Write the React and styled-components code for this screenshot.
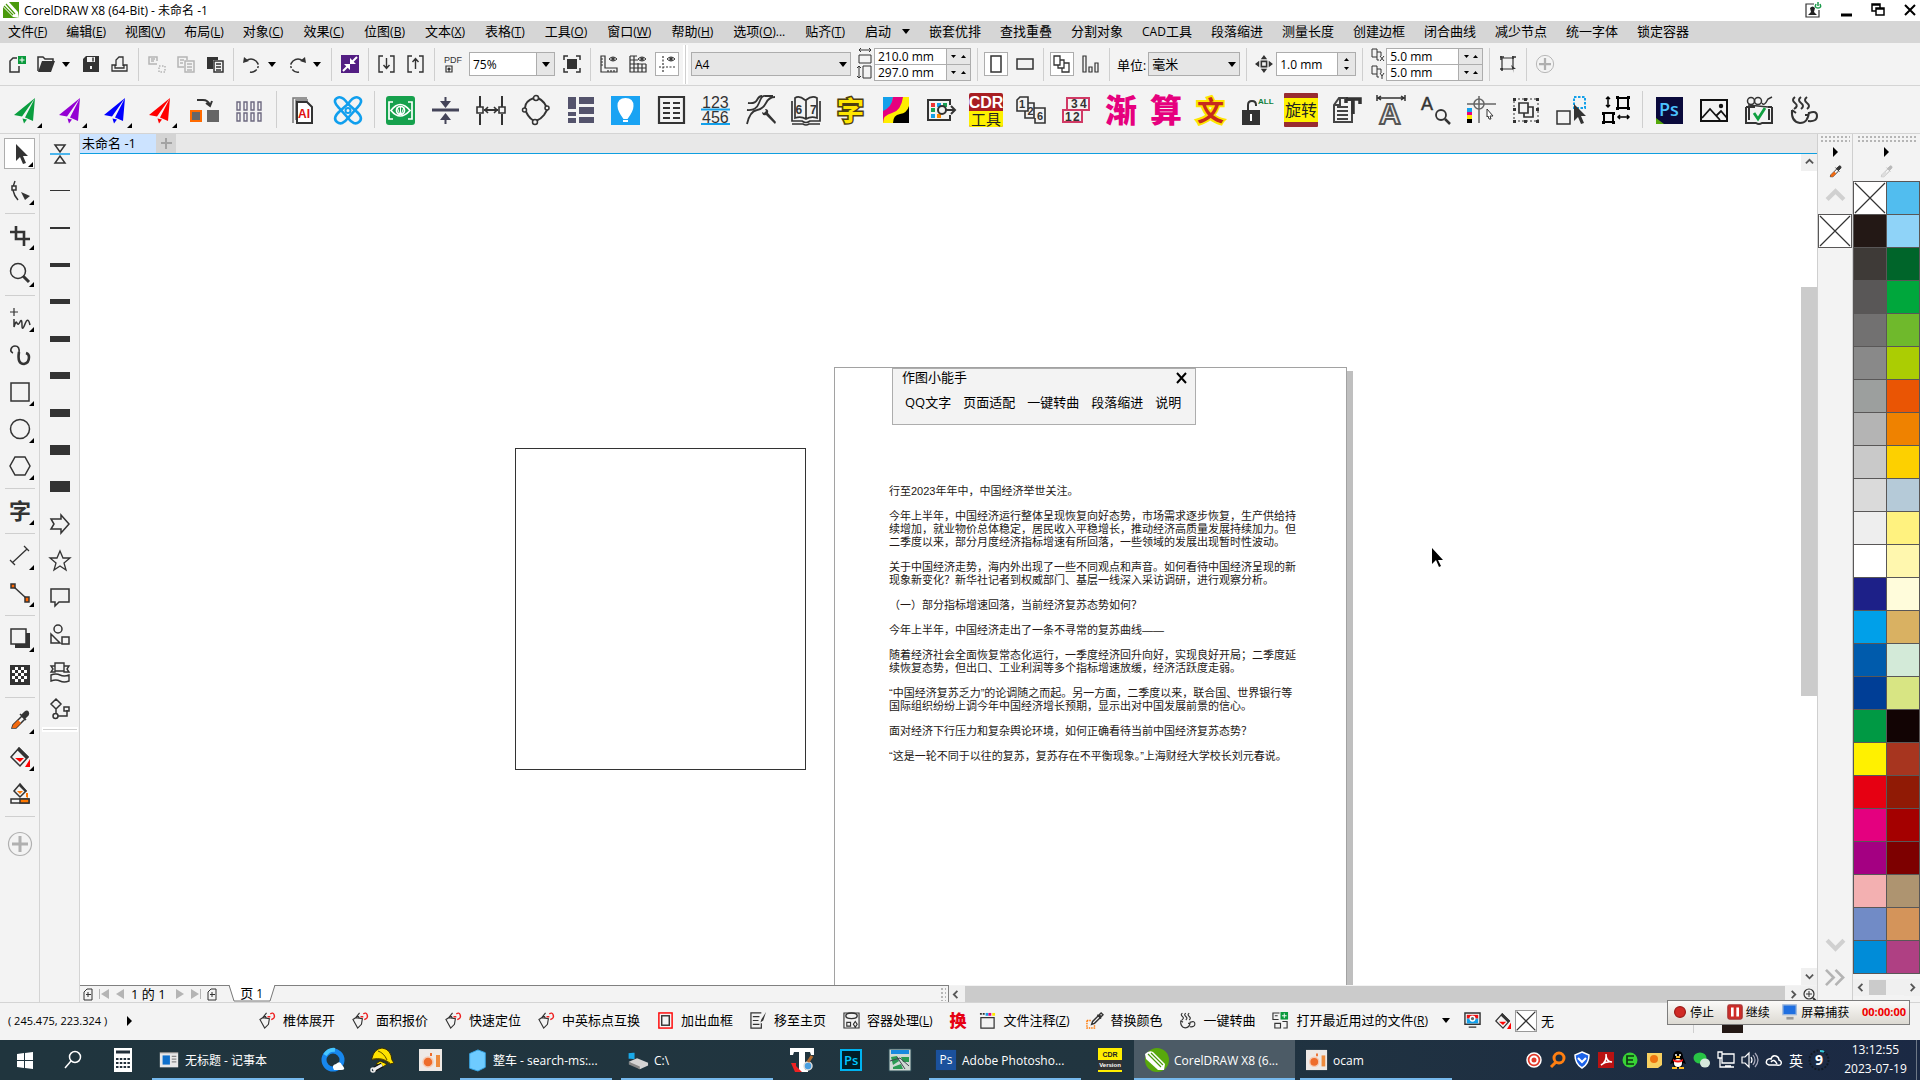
import React, { useState } from 'react';
import styled, { createGlobalStyle, css } from 'styled-components';

const FONT = `'Open Sans', 'Noto Sans CJK SC', sans-serif`;
const DARK = '#333333';

const GlobalStyle = createGlobalStyle`
  * {
    box-sizing: border-box;
  }
  body {
    margin: 0;
    font-family: ${FONT};
    font-size: 12px;
    color: #000;
    background: #f3f3f3;
  }
  button,
  input,
  select {
    font: inherit;
    color: inherit;
    margin: 0;
  }
  button {
    padding: 0;
    border: 0;
    background: none;
  }
`;

/* ---------- shared parts ---------- */

const Svg = styled.svg`
  display: block;
  flex: none;
  overflow: visible;
`;

const Icon = ({ name, size = 18, box = size, h = size }) => (
  <Svg
    width={size}
    height={h}
    viewBox={`0 0 ${box} ${(box * h) / size}`}
    fill="none"
    stroke={DARK}
    strokeWidth="1.5"
    aria-hidden="true"
  >
    {icons[name]}
  </Svg>
);

const Cn = styled.span`
  font-size: 13px;
`;

const Label = ({ text, accel, tail }) => (
  <>
    <Cn>{text}</Cn>
    {accel && (
      <>
        (<u>{accel}</u>){tail}
      </>
    )}
  </>
);

const triangles = {
  down: '0,0 8,0 4,5',
  right: '0,0 5,5 0,10',
  smallDown: '0,0 5,0 2.5,3',
  smallUp: '0,3 5,3 2.5,0',
};

const Tri = ({ dir = 'down', color = '#000' }) => {
  const small = dir.startsWith('small');
  return (
    <Svg
      width={small ? 5 : dir === 'right' ? 5 : 8}
      height={small ? 3 : dir === 'right' ? 10 : 5}
      aria-hidden="true"
    >
      <polygon points={triangles[dir]} fill={color} />
    </Svg>
  );
};

const Corner = styled.i`
  position: absolute;
  right: ${(p) => p.$right || 4}px;
  bottom: ${(p) => p.$bottom || 1}px;
  border-left: 5px solid transparent;
  border-bottom: 5px solid #000;
`;

/* ---------- icons ---------- */

const plane = (color) => (
  <g fill={color} stroke="none">
    <path d="M25 3L4 20l8 1.5zM25 3L15 22.5l8 3.500zM12.500 23.500l1.500 5 3-4z" />
  </g>
);

const pipette = (color, tip) => (
  <>
    <path d="M2 18l1-3 9-9 3 3-9 9z" stroke={color} />
    <path d="M2 18l1-3 5-5 3 3-5 5z" fill={tip} stroke="none" />
    <path d="M10 4l6 6M12 5l3-3q2-1.500 3 0t0 3l-3 3z" fill={color} stroke={color} />
  </>
);

const spray = (
  <>
    <path d="M1 8l3-2 7 1-1 6-4 4zM4 6l4-5M8 7L6 3" strokeWidth="1.200" />
    <path d="M9 5h3M12 2q3-2 4 1t-1 4l-2 1" stroke="#e22" strokeWidth="1.500" />
  </>
);

const cup = (
  <>
    <path d="M3 15q-1 12 8 13 8 0 9-11M20 18q8-3 8 3t-9 5M3 15l4 3M16 20h4" strokeWidth="2" />
    <path d="M6 2q-4 3 0 6t-1 6M12 2q-4 3 0 6t0 6M18 2q-4 3 0 6t0 6" strokeWidth="2" />
  </>
);

const icons = {
  /* standard bar, 18 x 18 */
  logo: (
    <g stroke="none">
      <rect width="16" height="16" fill="#4a9a0c" />
      <path d="M0 0h6l9 10 1 6-6-1L0 5z" fill="#fff" />
      <path d="M3 2l9 10M1 4l9 9" stroke="#4a9a0c" strokeWidth="1.200" />
    </g>
  ),
  newDoc: (
    <>
      <path d="M9 3H5L2 6v11h9v-6" />
      <path d="M10 1h8v8h-8z" fill="#0a9a3c" stroke="none" />
      <path d="M14 2.500v5M11.500 5h5" stroke="#fff" strokeWidth="1" />
    </>
  ),
  open: (
    <>
      <path d="M1 16V2h5l2 2h8v3" />
      <path d="M1 17L5 6h13l-4 11z" fill={DARK} stroke="none" />
    </>
  ),
  save: (
    <>
      <path d="M1 4l3-3h13v16H1z" fill={DARK} stroke="none" />
      <path d="M5 2h8v5H5zM8 11h2v3H8z" fill="#f3f3f3" stroke="none" />
      <path d="M11 2.500v4" />
    </>
  ),
  print: <path d="M5 11V5l3-3h4v9M1 10h3v3h9v-3h3v6H1z" strokeWidth="1.300" />,
  cut: (
    <g stroke="#b5b5b5">
      <path d="M9 9H1V2h8v4M3 4h4M3 6h3" />
      <path d="M11 11h6v6h-6z" strokeDasharray="1.500 1.500" />
    </g>
  ),
  copy: (
    <g stroke="#b5b5b5">
      <path d="M7 12H1V2h9v3M3 5h4M3 8h3" />
      <path d="M8 6h9v11H8zM10 9h5M10 12h5M10 15h5" />
    </g>
  ),
  paste: (
    <>
      <path d="M1 2h11v3H7v9H1z" fill={DARK} stroke="none" />
      <path d="M8 6h9v11H8zM10 9h5M10 12h5M10 15h5" />
    </>
  ),
  undo: (
    <>
      <path d="M3 6q5-4 10 0 4 4 1 8-3 4-7 3" strokeDasharray="15 1.500 2 1.500" />
      <path d="M0 8l1-6 5 4z" fill={DARK} stroke="none" />
    </>
  ),
  redo: (
    <>
      <path d="M15 6q-5-4-10 0-4 4-1 8 3 4 7 3" strokeDasharray="15 1.500 2 1.500" />
      <path d="M18 8l-1-6-5 4z" fill={DARK} stroke="none" />
    </>
  ),
  connect: (
    <>
      <rect width="18" height="18" fill="#531e83" stroke="none" />
      <path d="M2 16l6-6M16 2l-6 6" stroke="#fff" strokeWidth="2" />
      <path d="M3 9h6v6zM15 9H9V3z" fill="#fff" stroke="none" />
    </>
  ),
  importIn: <path d="M5 1H1v16h4M12 1h4v16h-4M8.500 3v10M5.500 10l3 3.500 3-3.500" strokeWidth="1.400" />,
  exportOut: <path d="M5 1H1v16h4M12 1h4v16h-4M8.500 14V4M5.500 7l3-3.500 3 3.500" strokeWidth="1.400" />,
  pdf: (
    <>
      <text x="0" y="8" fontSize="9" fontFamily="Liberation Sans" fill={DARK} stroke="none">
        PDF
      </text>
      <path d="M2 17V11h6v6zM5 17v-4M3.500 14.500L5 13l1.500 1.500" strokeWidth="1.200" />
    </>
  ),
  fullscreen: (
    <>
      <rect x="4" y="4" width="10" height="10" fill={DARK} stroke="none" />
      <path d="M1 5V1h4M13 1h4v4M17 13v4h-4M5 17H1v-4" />
    </>
  ),
  rulers: (
    <>
      <path d="M1 1h4v12h12v4H1zM1 4h2M1 7h2M1 10h2M8 17v-2M11 17v-2M14 17v-2" strokeWidth="1.200" />
      <path d="M9 4q4-4 8 0-4 4-8 0z" strokeWidth="1" />
      <circle cx="13" cy="4" r="1" />
    </>
  ),
  grid: (
    <>
      <path d="M1 1v16h16V9M1 5h8M1 9h16M1 13h16M5 1v16M9 8v9M13 9v8M1 1h7" strokeWidth="1.200" />
      <path d="M9 4q4-4 8 0-4 4-8 0z" strokeWidth="1" />
      <circle cx="13" cy="4" r="1" />
    </>
  ),
  guides: (
    <>
      <path d="M5 1v16M1 12h16" strokeDasharray="2 1.500" strokeWidth="1.200" />
      <path d="M9 4q4-4 8 0-4 4-8 0z" strokeWidth="1" />
      <circle cx="13" cy="4" r="1" />
    </>
  ),
  pageW: <path d="M1 7h12v8H1zM1 2h12M3 0L1 2l2 2M11 0l2 2-2 2" strokeWidth="1" />,
  pageH: <path d="M5 2h8v12H5zM1 2v12M-1 4l2-2 2 2M-1 12l2 2 2-2" strokeWidth="1" />,
  portrait: <path d="M4 1h10v16H4z" />,
  landscape: <path d="M1 4h16v10H1z" />,
  pages: <path d="M1 1h6v9H1zM7 5h4v8H5v-3M11 8h5v9H9v-4" strokeWidth="1.300" />,
  bars: <path d="M1 1h3v16H1zM7 12h3v5H7zM13 8h3v9h-3z" strokeWidth="1.200" />,
  nudge: (
    <>
      <path d="M6 6h5v5H6z" />
      <path d="M8.500 0l3 4h-6zM8.500 17l3-4h-6zM0 8.500l4-3v6zM17 8.500l-4-3v6z" fill={DARK} stroke="none" />
    </>
  ),
  dupX: (
    <>
      <path d="M1 1h5v8H1zM6 4h4v4M6 9v3h2" strokeWidth="1" />
      <path d="M9 8l4 5M13 8l-4 5" strokeWidth="1" />
    </>
  ),
  dupY: (
    <>
      <path d="M1 1h5v8H1zM6 4h4v4M6 9v3h2" strokeWidth="1" />
      <path d="M9 8l2 3 2-3M11 11v3" strokeWidth="1" />
    </>
  ),
  treatAs: (
    <>
      <path d="M3 3h11v11H3z" strokeWidth="1.200" />
      <path d="M1 2h4M2 1v4M13 2h4M14 1v3M1 14h3M3 13v3" />
      <path d="M12 10l5 4-3 0 1 4z" fill={DARK} stroke="none" />
    </>
  ),
  plus: (
    <g stroke="#b0b0b0">
      <circle cx="12" cy="12" r="11.500" strokeWidth="1.200" />
      <path d="M12 4v16M4 12h16" strokeWidth="3" />
    </g>
  ),
  account: (
    <>
      <path d="M9 2H1v13h13V8" strokeWidth="1.200" />
      <path d="M5 6q2.500-3 5 0l-1 4 3 3H3l3-3z" fill="#222" stroke="none" />
      <path d="M11 2q-2 4 2 4t2-4M13 0v4" stroke="#1a9a4a" />
    </>
  ),

  /* custom toolbar, 30 x 30 */
  planeGreen: plane('#0a9e3f'),
  planePurple: plane('#9400d3'),
  planeBlue: plane('#0000ff'),
  planeRed: plane('#ff0000'),
  swap: (
    <>
      <rect x="1" y="16" width="10" height="10" fill="#666" stroke="#ff6a00" strokeWidth="2" />
      <rect x="17" y="15" width="12" height="12" fill="#666" stroke="none" />
      <path d="M7 5h6q5 0 7 5M16 8l4 3 2-5" strokeWidth="2" />
    </>
  ),
  cells: (
    <path
      d="M2 7h3v8H2zM9 7h3v8H9zM16 7h3v8h-3zM23 7h3v8h-3zM2 18h3v8H2zM9 18h3v8H9zM16 18h3v8h-3zM23 18h3v8h-3z"
      stroke="#6d6980"
      strokeWidth="1.400"
    />
  ),
  ai: (
    <>
      <path d="M5 28V3h14M8 25V5h12" stroke="#777" />
      <path d="M9 7h10l5 5v16H9z" fill="#fff" strokeWidth="2" />
      <text x="10" y="23" fontSize="12" fontWeight="700" fontFamily="Liberation Sans" fill="#e01010" stroke="none">
        AI
      </text>
    </>
  ),
  atom: (
    <g stroke="#109fee" strokeWidth="2.600">
      <path d="M15 9q-6-9-11-6T6 13l9 10q6 8 11 4t-3-11z" />
      <path d="M15 9q6-9 11-6t-2 10l-9 10q-6 8-11 4t3-11z" />
      <circle cx="15" cy="15.500" r="2.500" strokeWidth="2" />
    </g>
  ),
  eye: (
    <>
      <rect x="0" y="1" width="29" height="29" rx="3" fill="#16a14d" stroke="none" />
      <g stroke="#fff" strokeWidth="1.700">
        <path d="M7 7H3v17h4M22 7h4v17h-4M5 15.500q9-12 19 0-10 11-19 0z" />
        <circle cx="14.500" cy="15.500" r="4" />
        <path d="M14.500 11v9M11 12l3 8M18 12l-3 8" strokeWidth="1" />
      </g>
    </>
  ),
  squeeze: (
    <g stroke="#444459">
      <path d="M1 15h27" strokeWidth="3" />
      <path d="M14.500 2v6M14.500 22v7" strokeWidth="2" />
      <path d="M9 6h11l-5.500 7zM9 25h11l-5.500-7z" fill="#444459" stroke="none" />
    </g>
  ),
  span: (
    <>
      <path d="M4 1v11M4 19v11M26 1v11M26 19v11M8 15h14" strokeWidth="2" />
      <path d="M1 12h6v6H1zM23 12h6v6h-6zM12 12l-3 3 3 3M18 12l3 3-3 3" strokeWidth="1.600" />
    </>
  ),
  rotate: (
    <>
      <path d="M13 3Q4 6 4 13q2 9 9 13M17 3q8 4 9 12l-3 5q-3 4-8 6" strokeWidth="2" />
      <circle cx="15" cy="3" r="2.500" fill="#f3f3f3" />
      <circle cx="3.500" cy="15" r="2" fill="#f3f3f3" />
      <circle cx="26" cy="13" r="2" fill="#f3f3f3" />
      <circle cx="14" cy="27" r="2.500" fill="#f3f3f3" />
    </>
  ),
  blocks: (
    <path d="M2 2h8v12H2zM13 2h15v7H13zM13 12h15v7H13zM2 17h8v4H2zM2 23h8v5H2zM13 22h15v6H13z" fill="#54536c" stroke="none" />
  ),
  balloon: (
    <>
      <rect x="0" y="1" width="29" height="29" fill="#1aa3f3" stroke="none" />
      <path d="M14.500 3q8 0 8 8 0 5-6 13h-4q-6-8-6-13 0-8 8-8zM12 25h5v2h-5z" fill="#fff" stroke="none" />
    </>
  ),
  list: (
    <>
      <path d="M3 2h25v26H3z" strokeWidth="2.200" />
      <path d="M7 8h7M17 8h7M7 13h7M17 13h7M7 18h7M17 18h7M7 23h7M17 23h7" strokeWidth="2" />
    </>
  ),
  numbers: (
    <>
      <g fill={DARK} stroke="none" fontSize="16" fontFamily="Liberation Sans">
        <text x="1" y="13">123</text>
        <text x="1" y="28">456</text>
      </g>
      <path d="M0 14.500h29M0 29h29" stroke="#13a0ea" strokeWidth="1.800" />
    </>
  ),
  curves: (
    <>
      <path d="M2 8q7 1 9-3t5-4M1 15q9 1 12-7t6-7h8M1 29q3-13 10-14 6-1 9-7t9-6" strokeWidth="1.800" />
      <path d="M29 29L20 20q-4 1-4-3l2 1 2-2-1-2q4 0 3 4l8 9z" fill={DARK} stroke="none" />
    </>
  ),
  book: (
    <>
      <path d="M14 5q-6-5-10-2v20q6-2 11 1 5-3 11-1V3q-5-3-11 2zM15 5v18M1 6v20h10q4 3 8 0h10V6M1 29h11q3 2 6 0h11" strokeWidth="1.700" />
      <text x="4.500" y="19" fontSize="12" fontWeight="700" fontFamily="Liberation Sans" fill={DARK} stroke="none">
        6
      </text>
      <text x="19" y="19" fontSize="12" fontWeight="700" fontFamily="Liberation Sans" fill={DARK} stroke="none">
        7
      </text>
    </>
  ),
  zi: (
    <text x="1" y="26" fontSize="27" fontWeight="700" fontFamily="Noto Sans CJK SC" fill="#ffe600" stroke="#4d3d10" strokeWidth="3" paintOrder="stroke">
      字
    </text>
  ),
  cmyk: (
    <g stroke="none">
      <rect x="2" y="2" width="26" height="26" fill="#ffee00" />
      <path d="M2 2h10q0 10-10 15z" fill="#13a0ea" />
      <path d="M12 2h10q-2 14-11 16T2 28V16Q11 12 12 2z" fill="#e6007e" />
      <path d="M28 11v17H12q0-8 7-9t9-8z" fill="#000" />
    </g>
  ),
  colorExport: (
    <>
      <path d="M24 10V5H2v20h22v-5" strokeWidth="2" />
      <g stroke="none">
        <path d="M5 8h4v4H5z" fill="#e33" />
        <path d="M11 8h4v4h-4zM5 19h4v4H5z" fill="#13a0ea" />
        <path d="M17 8h4v4h-4zM5 13h4v4H5z" fill="#18a055" />
        <path d="M11 19h4v4h-4z" fill="#ff8a00" />
      </g>
      <circle cx="16" cy="15" r="4" strokeWidth="2" />
      <path d="M20 15h8M25 11l4 4-4 4" strokeWidth="2" />
    </>
  ),
  cdr: (
    <g stroke="none" textAnchor="middle">
      <rect x="-2" y="-2" width="34" height="34" rx="2" fill="#a81e22" />
      <path d="M-2 16h34v14q0 2-2 2H0q-2 0-2-2z" fill="#fdf000" />
      <text x="15" y="13" fontSize="16" fontWeight="600" fontFamily="Liberation Sans" fill="#fff">
        CDR
      </text>
      <text x="15" y="30" fontSize="15" fontFamily="Noto Sans CJK SC" fill="#222">
        工具
      </text>
    </g>
  ),
  steps: (
    <>
      <path d="M1 5l3-3h8v14H1zM12 8h6v15H9v-7M18 13h11v15H19v-5" strokeWidth="1.600" />
      <g fontSize="11" fontWeight="700" fontFamily="Liberation Sans" fill={DARK} stroke="none">
        <text x="3" y="13">1</text>
        <text x="11.500" y="20">2</text>
        <text x="21" y="25">6</text>
      </g>
    </>
  ),
  boxes: (
    <>
      <path d="M6 3h22v12H6zM2 15h19v12H2z" stroke="#d13a66" strokeWidth="2" />
      <g fontSize="12" fontWeight="700" fontFamily="Liberation Sans" fill={DARK} stroke="none">
        <text x="10" y="13">3</text>
        <text x="19" y="13">4</text>
        <text x="4" y="26">1</text>
        <text x="12" y="26">2</text>
      </g>
    </>
  ),
  jian: (
    <text x="-1" y="27" fontSize="32" fontWeight="900" fontFamily="Noto Sans CJK SC" fill="#e6007e" stroke="none">
      渐
    </text>
  ),
  suan: (
    <text x="-1" y="27" fontSize="32" fontWeight="900" fontFamily="Noto Sans CJK SC" fill="#e6007e" stroke="none">
      算
    </text>
  ),
  wen: (
    <text x="1" y="26" fontSize="27" fontWeight="700" fontFamily="Noto Sans CJK SC" fill="#c62a1e" stroke="#ffe600" strokeWidth="4" paintOrder="stroke">
      文
    </text>
  ),
  unlock: (
    <>
      <rect x="1" y="15" width="18" height="15" fill={DARK} stroke="none" />
      <path d="M7 15V10q0-4 4-4t4 4v1" strokeWidth="2" />
      <path d="M10 20v6M9 20h2" stroke="#fff" strokeWidth="2" />
      <text x="17" y="9" fontSize="8" fontWeight="700" fontFamily="Liberation Sans" fill="#11803c" stroke="none">
        ALL
      </text>
    </>
  ),
  turn: (
    <g stroke="none">
      <rect x="-2" y="-2" width="34" height="34" rx="1" fill="#992c30" />
      <rect x="-2" y="3" width="34" height="24" fill="#fff200" />
      <text x="-1" y="21" fontSize="16" fontFamily="Noto Sans CJK SC" fill="#222">
        旋转
      </text>
    </g>
  ),
  article: (
    <>
      <path d="M8 3h8v2h5v22H3V10z" stroke="#444" strokeWidth="2" />
      <path d="M6 12h11M6 16h11M6 20h11M6 24h11M3 10h6V3" stroke="#444" strokeWidth="2" />
      <path d="M15 4h14v5M22 4v15M15 4v4" strokeWidth="3.500" />
    </>
  ),
  fitText: (
    <>
      <path d="M1 0v6M29 0v6M1 3h28M5 1L2 3l3 2M25 1l3 2-3 2" strokeWidth="1.500" />
      <text x="3" y="29" fontSize="30" fontWeight="700" fontFamily="Liberation Sans" fill="#eee" stroke="#555" strokeWidth="2">
        A
      </text>
    </>
  ),
  findText: (
    <>
      <text x="0" y="15" fontSize="18" fontFamily="Liberation Sans" fill={DARK} stroke={DARK} strokeWidth="0.5">
        A
      </text>
      <circle cx="20" cy="20" r="5" strokeWidth="1.800" />
      <path d="M24 24l5 5" strokeWidth="2.500" />
    </>
  ),
  target: (
    <>
      <path d="M1 9h29M13 1v27" stroke="#666" />
      <circle cx="13" cy="9" r="5" stroke="#666" />
      <g stroke="none">
        <path d="M1 13h5v4H1z" fill="#13a0ea" />
        <path d="M1 17h5v3H1z" fill="#e6007e" />
        <path d="M1 20h5v4H1z" fill="#ffe600" />
        <path d="M1 24h5v4H1z" fill="#000" />
      </g>
      <path d="M21 14l6 7-3 0 1 3-2 0-1-3-1 1z" fill="#fff" strokeWidth="1" />
    </>
  ),
  group: (
    <>
      <path d="M3 4h24v22H3z" strokeDasharray="2 2" strokeWidth="1" />
      <path d="M8 8h9v10H8zM17 12h5v10H13v-4" strokeWidth="1.700" />
      <path
        d="M2 3h3v3H2zM13 3h3v3h-3zM25 3h3v3h-3zM2 13h3v3H2zM25 13h3v3h-3zM2 25h3v3H2zM13 25h3v3h-3zM25 25h3v3h-3z"
        fill={DARK}
        stroke="none"
      />
    </>
  ),
  moveTo: (
    <>
      <path d="M1 16h13v13H1z" />
      <path d="M18 2h11v11H18z" stroke="#13a0ea" strokeWidth="2" strokeDasharray="2.500 1.500" />
      <path d="M18 9v17l4-4 3 7 3-1-3-7h5z" fill={DARK} stroke="none" />
    </>
  ),
  resize: (
    <g stroke="#000">
      <path d="M17 3h10v10H17zM3 18h9v9H3z" strokeWidth="2" />
      <path d="M7 2v10M5 4l2-2 2 2M5 10l2 2 2-2M17 22h11M19 20l-2 2 2 2M26 20l2 2-2 2" strokeWidth="1.500" />
      <path d="M15 1h3v3h-3zM26 1h3v3h-3zM15 12h3v3h-3zM26 12h3v3h-3zM1 17h3v3H1zM11 17h3v3h-3zM1 26h3v3H1zM11 26h3v3h-3z" fill="#000" stroke="none" />
    </g>
  ),
  ps: (
    <>
      <rect x="2" y="2" width="27" height="27" fill="#0a0a3c" stroke="none" />
      <path d="M2 23l8 6H2z" fill="#54a80a" stroke="none" />
      <text x="5" y="21" fontSize="18" fontWeight="600" fontFamily="Open Sans" fill="#4cc2ff" stroke="none">
        Ps
      </text>
    </>
  ),
  image: (
    <>
      <path d="M2 5h26v21H2z" stroke="#111" strokeWidth="2" />
      <path d="M3 23l8-9 10 11M17 21l5-5 6 7" stroke="#111" strokeWidth="1.800" />
      <circle cx="22" cy="11" r="2.200" fill="#111" stroke="none" />
    </>
  ),
  shelf: (
    <>
      <path d="M2 12h8v-1M28 12h-4M2 12v16h10q3 2 6 0h10V12M5 12v13M25 14v11" strokeWidth="2" />
      <circle cx="7" cy="6" r="3.500" />
      <circle cx="14" cy="6" r="3.500" />
      <path d="M18 8q2 4 6-4l4-2M4 10l20 2" />
      <path d="M10 18l4 6 7-11" stroke="#10a040" strokeWidth="2.800" />
    </>
  ),
  cup,

  /* toolbox, 20 x 20 */
  pick: <path d="M6 0v17l4-4 3 7 3-1-3-7h5z" fill={DARK} stroke="none" />,
  shape: (
    <>
      <path d="M5 0q-5 10 3 19" />
      <rect x="2" y="5" width="4" height="4" fill="#f3f3f3" />
      <path d="M11 11l9 4-5 4z" fill={DARK} stroke="none" />
    </>
  ),
  crop: <path d="M6 0v13h14M0 6h14v14" strokeWidth="2.600" />,
  zoom: (
    <>
      <circle cx="8" cy="8" r="7.500" />
      <path d="M13 13l6 6" strokeWidth="3" />
    </>
  ),
  freehand: (
    <>
      <path d="M4 0v8M0 4h8" strokeWidth="1.200" />
      <path d="M4 11v8q2-7 3-4t3-1 2 3 3-1 5 1" strokeWidth="1.500" />
    </>
  ),
  artistic: (
    <>
      <path d="M3 8Q0 7 1 4q1-3 4-3 5 0 4 7" strokeWidth="1.600" />
      <path d="M9 7q-2 12 5 12 5-1 5-7 0-3-3-4" strokeWidth="2.600" />
    </>
  ),
  rect: <rect x="1" y="1" width="18" height="18" />,
  ellipse: <circle cx="10" cy="10" r="9.500" />,
  polygon: <path d="M5 1h10l5 9-5 9H5l-5-9z" />,
  textTool: (
    <text x="-1" y="18" fontSize="22" fontWeight="700" fontFamily="Noto Sans CJK SC" fill={DARK} stroke="none">
      字
    </text>
  ),
  dimension: <path d="M2 17L17 3M0 14l5 5M14 0l5 5" strokeWidth="1.300" />,
  connector: (
    <>
      <path d="M4 4l12 11" />
      <rect x="1" y="1" width="4" height="4" fill="#f60" />
      <rect x="15" y="14" width="4" height="5" fill="#f60" />
    </>
  ),
  shadow: (
    <>
      <path d="M5 5h15v15H5z" fill={DARK} stroke="none" />
      <path d="M1 1h15v15H1z" fill="#f3f3f3" />
    </>
  ),
  checker: (
    <>
      <rect width="20" height="20" fill={DARK} stroke="none" />
      <path
        d="M5 2h3v3H5zM11 2h3v3h-3zM2 5h3v3H2zM8 5h3v3H8zM14 5h3v3h-3zM5 8h3v3H5zM11 8h3v3h-3zM2 11h3v3H2zM8 11h3v3H8zM14 11h3v3h-3zM5 14h3v3H5zM11 14h3v3h-3z"
        fill="#fff"
        stroke="none"
      />
    </>
  ),
  dropper: pipette(DARK, '#f26a10'),
  dropperGrey: pipette('#b9b9b9', '#ddd'),
  bucket: (
    <>
      <path d="M9 1L1 10l9 9 8-9z" />
      <path d="M9 0l10 10-3 2L7 3z" fill={DARK} stroke="none" />
      <path d="M5 11h9l-4 4zM20 12v8h-5z" fill="#f00" stroke="none" />
    </>
  ),
  smartFill: (
    <>
      <path d="M10 0L4 7l6 6 6-6z" />
      <path d="M10 0l7 7-2 1-6-6z" fill={DARK} stroke="none" />
      <path d="M7 7h6l-3 3zM16 9h2v5l-2-1z" fill="#f70" stroke="none" />
      <rect x="1" y="15" width="18" height="4" />
      <rect x="10" y="15" width="9" height="4" fill="#f70" />
    </>
  ),
  hourglass: (
    <>
      <path d="M5 1h10l-5 7zM5 19h10l-5-7z" />
      <path d="M0 10h20" stroke="#13a0ea" />
    </>
  ),
  arrowShape: <path d="M1 5h10V1l8 9-8 9v-4H1l3-5z" />,
  star: <path d="M10 0l3 7h7l-6 5 2 7-6-4-6 4 2-7-6-5h7z" strokeWidth="1.300" />,
  callout: <path d="M1 1h18v13H9l-4 4v-4H1z" />,
  shapes: <path d="M12 4a4 4 0 1 1-8 0 4 4 0 1 1 8 0zM1 9v9h9zM12 12h7v7h-7z" />,
  banner: (
    <path d="M5 1h9v8H5zM5 4H1l2 3-2 3h4V7M14 4h5l-2 3 2 3h-5V7M1 13q5-2 9 0t9 0v6q-5 2-9 0t-9 0z" strokeWidth="1.400" />
  ),
  flow: <path d="M6 0l5 5-5 5-5-5zM6 10v4M8 17h9v-6M14 8h5v4h-5zM8 17a2.500 2.500 0 1 1-5 0 2.500 2.500 0 1 1 5 0z" />,

  /* status bar, 18 x 18 */
  spray,
  bleed: (
    <>
      <rect x="2" y="1" width="14" height="16" stroke="#f00" />
      <rect x="5" y="4" width="8" height="10" />
    </>
  ),
  note: (
    <>
      <path d="M12 1H1v16h11v-5M3 5h7M3 9h6M3 13h7" strokeWidth="1.300" />
      <path d="M17 0l-5 8-1 3 3-2z" fill={DARK} stroke="none" />
    </>
  ),
  container: (
    <>
      <ellipse cx="9" cy="4" rx="6" ry="3" />
      <path d="M1 1h16v16H1zM4 11h4v4H4zM13 10l2 3-2 3-2-3z" strokeWidth="1.200" />
    </>
  ),
  swatchDoc: (
    <>
      <path d="M2 6h14v11H2z" strokeWidth="1.300" />
      <g stroke="none">
        <path d="M1 1h2v2H1zM4 1h2v2H4z" fill="#333" />
        <path d="M7 1h3v3H7z" fill="#13a0ea" />
        <path d="M10 1h3v3h-3z" fill="#e6007e" />
        <path d="M14 1h3v3h-3z" fill="#ffe600" />
      </g>
    </>
  ),
  replace: (
    <>
      <path d="M1 9h4M1 9v8h8v-3" stroke="#f70" strokeDasharray="1.500 1" />
      <path d="M6 13l1-3 6-6 2 2-6 6zM12 3l4 4M14 3l2-2 2 2-2 2z" />
    </>
  ),
  recent: (
    <>
      <path d="M7 8H1V1h7M3 4h3M3 12h6v5H3z" strokeWidth="1.200" />
      <path d="M9 0h8v8H9z" fill="#0a9a3c" stroke="none" />
      <path d="M13 1.500v5M10.500 4h5" stroke="#fff" strokeWidth="1" />
      <path d="M11 10h5v7h-4" strokeWidth="1.200" />
    </>
  ),
  monitor: (
    <>
      <path d="M1 1h16v12H1zM5 16h8" />
      <path d="M3 3h12v4H3z" fill="#e11" stroke="none" />
      <path d="M3 7h12v5H3z" fill="#13a0ea" stroke="none" />
      <circle cx="9" cy="7" r="2.500" stroke="#fff" fill="#666" />
    </>
  ),
  pageAdd: <path d="M1 4l3-3h5v11H1zM5 4v5M3 6.500h5" strokeWidth="1" />,
  first: (
    <g fill="#b4b4b4" stroke="none">
      <path d="M0 1h1v10H0zM10 1v10L2 6z" />
    </g>
  ),
  prev: <path d="M9 1v10L1 6z" fill="#b4b4b4" stroke="none" />,
  next: <path d="M1 1v10l8-5z" fill="#b4b4b4" stroke="none" />,
  last: <path d="M0 1v10l8-5zM9 1h1v10H9z" fill="#b4b4b4" stroke="none" />,
  zoomSmall: (
    <>
      <circle cx="6" cy="6" r="5" strokeWidth="1.200" />
      <path d="M10 10l3 3" strokeWidth="2" />
      <path d="M6 3v6M3 6h6" strokeWidth="1" />
    </>
  ),

  /* taskbar, 24 x 24 */
  windows: <path d="M4 6l7-1v7H4zM12 5l8-1v8h-8zM4 13h7v7l-7-1zM12 13h8v8l-8-1z" fill="#fff" stroke="none" />,
  search: (
    <g stroke="#fff">
      <circle cx="13" cy="9" r="5.500" />
      <path d="M9 13l-6 7" />
    </g>
  ),
  calc: (
    <>
      <rect x="3" y="0" width="18" height="24" fill="#fff" stroke="none" />
      <path d="M5 4h14" stroke="#222f3a" strokeWidth="3" />
      <path d="M5 11h14M5 15h14M5 19h14" stroke="#222f3a" strokeWidth="2" strokeDasharray="2.500 1.300" />
    </>
  ),
  notepad: (
    <>
      <rect x="2" y="4" width="20" height="16" fill="#e8e8e8" stroke="none" />
      <rect x="5" y="7" width="8" height="10" fill="#0f70cc" stroke="none" />
      <path d="M15 8h5M15 11h5M15 14h5M2 4h20" stroke="#888" strokeWidth="1.200" />
    </>
  ),
  browser: (
    <>
      <circle cx="12" cy="12" r="9" stroke="#1787ee" strokeWidth="5" />
      <path d="M4 7q4-6 10-5" stroke="#47c6ff" strokeWidth="4" />
      <path d="M13 22q-3-5 2-6 4-4 6 1 5 5-1 5z" fill="#fff" stroke="none" />
    </>
  ),
  helmet: (
    <>
      <path d="M2 10Q4 1 12 0q9 1 10 12l2 3-4 1Q12 9 2 12z" fill="#ffe200" stroke="#3b3000" strokeWidth="1" />
      <path d="M8 3q6 2 9 9M3 11q9-2 17 4" stroke="#5c4c00" strokeWidth="1" />
      <path d="M6 16l4-3 7 3-4 3z" fill="#ffe200" stroke="#3b3000" strokeWidth="1" />
      <path d="M3 22l9-5" stroke="#111" strokeWidth="5" />
      <path d="M3 22l9-5" stroke="#eee" strokeWidth="3" />
      <circle cx="3" cy="22" r="2" stroke="#eee" />
    </>
  ),
  ocam: (
    <>
      <rect x="0" y="1" width="23" height="22" fill="#eee9e6" stroke="none" />
      <circle cx="9" cy="14" r="5" fill="#ee6c2b" stroke="#f6c9b2" />
      <rect x="17" y="7" width="4" height="12" fill="#ee8b3d" stroke="none" />
      <path d="M12 5v3" stroke="#ee6c2b" strokeWidth="2" />
    </>
  ),
  cube: <path d="M4 5l9-4 8 3v16l-8 4-9-3z" fill="#6ecbff" stroke="#38a7e8" strokeWidth="1" />,
  drive: (
    <>
      <path d="M1 4l8-1v9l-8-1z" fill="#19a9e8" stroke="#20343e" />
      <path d="M2 14l9-4 12 5v3l-9 4z" fill="#d4d4d4" stroke="none" />
      <path d="M2 14l12 5v3L2 17z" fill="#868686" stroke="none" />
    </>
  ),
  typeTool: (
    <>
      <path d="M0 0h24v7h-3l-1-3h-5v18h3v2H6v-2h3V4H4L3 7H0z" fill="#fff" stroke="none" />
      <path d="M1 15h5v3l6 6H5z" fill="#e22" stroke="none" />
      <circle cx="18" cy="18" r="4" fill="#4a9fe0" stroke="#ddd" />
      <path d="M18 14l4-6" stroke="#b56a2c" strokeWidth="3" />
    </>
  ),
  psBlack: (
    <>
      <rect x="2" y="2" width="20" height="20" fill="#001d26" stroke="#00b3f0" strokeWidth="2" />
      <text x="5" y="17" fontSize="13" fontWeight="600" fontFamily="Open Sans" fill="#00c8ff" stroke="none">
        Ps
      </text>
    </>
  ),
  psBlue: (
    <>
      <rect x="1" y="1" width="22" height="22" fill="#1b519c" stroke="none" />
      <text x="5" y="16" fontSize="13" fontFamily="Open Sans" fill="#fff" stroke="none">
        Ps
      </text>
    </>
  ),
  calcColor: (
    <>
      <rect x="1" y="1" width="22" height="22" fill="#cfdad4" stroke="none" />
      <path d="M3 4h18" stroke="#188adf" strokeWidth="4" />
      <path d="M1 1h22v22H1z" stroke="#2b4a55" strokeWidth="1" />
      <path d="M3 9l6-1 2 5-6 4zM13 9h8v5h-6zM5 19l8-3 2 5H5z" fill="#2a9a52" stroke="none" />
      <path d="M2 13l10-3 9 8M9 9l8 12" stroke="#445" strokeWidth="1" />
    </>
  ),
  cdrVersion: (
    <g stroke="none" fontFamily="Liberation Sans" fontWeight="700" textAnchor="middle">
      <rect width="24" height="24" fill="#333" />
      <path d="M0 0h24v12H0zM0 22h24v2H0z" fill="#ffee00" />
      <text x="12" y="9" fontSize="7" fill="#222">
        CDR
      </text>
      <text x="12" y="19" fontSize="6" fill="#fff">
        Version
      </text>
    </g>
  ),
  corel: (
    <g stroke="none">
      <circle cx="12" cy="12" r="12" fill="#58a80c" />
      <path d="M0 6q4-4 8-2l12 12-1 6-6 0L1 11z" fill="#fff" />
      <path d="M3 6l13 13M6 5l12 12" stroke="#4a9a0c" strokeWidth="1.200" />
    </g>
  ),
  stopDot: <circle cx="9" cy="9" r="7" fill="#d02a26" stroke="#9c1b18" />,
  pause: (
    <>
      <rect x="1" y="1" width="16" height="16" rx="2" fill="#cf2c28" stroke="#a33" />
      <path d="M6 4v10M12 4v10" stroke="#fff" strokeWidth="3" />
    </>
  ),
  screen: (
    <>
      <rect x="1" y="1" width="15" height="11" fill="#1f6fe0" stroke="#9bb6dc" />
      <path d="M5 16h8" stroke="#999" strokeWidth="3" />
    </>
  ),

  /* tray, 18 x 18 */
  trayRec: (
    <>
      <circle cx="9" cy="9" r="7" fill="#e23a2a" stroke="#fff" />
      <circle cx="9" cy="9" r="3.500" fill="#e23a2a" stroke="#fff" strokeWidth="2" />
    </>
  ),
  traySearch: (
    <g stroke="#ff7f11" strokeWidth="3">
      <circle cx="10" cy="7" r="5" />
      <path d="M7 11l-5 5" />
    </g>
  ),
  trayShield: (
    <>
      <path d="M9 1l7 3q0 9-7 13Q2 13 2 4z" fill="#1d63e8" stroke="#fff" />
      <path d="M5 7l4 4 4-4" stroke="#fff" strokeWidth="2" />
    </>
  ),
  trayPdf: (
    <>
      <rect x="1" y="1" width="16" height="16" fill="#b81212" stroke="none" />
      <path d="M4 14q6-3 5-11 0 8 6 8-6-1-11 3z" stroke="#fff" />
    </>
  ),
  trayE: (
    <>
      <circle cx="9" cy="9" r="7.500" fill="#38d335" stroke="none" />
      <path d="M13 5H6v8h7M6 9h6" stroke="#0d3512" strokeWidth="1.700" />
    </>
  ),
  trayNote: (
    <>
      <path d="M2 2h15v12l-4 3H2z" fill="#f8d060" stroke="none" />
      <circle cx="9" cy="8" r="4" fill="#ee7410" stroke="none" />
    </>
  ),
  trayPenguin: (
    <g stroke="none">
      <path d="M9 0q5 0 5 6l3 7-3-1q0 5-5 5t-5-5l-3 1 3-7q0-6 5-6z" fill="#000" />
      <ellipse cx="9" cy="12" rx="4" ry="4" fill="#fff" />
      <path d="M4 8q5 3 10 0v2q-5 3-10 0z" fill="#e11" />
      <path d="M3 16h5v2H3zM10 16h5v2h-5zM7 5h4v2H7z" fill="#fb2" />
      <circle cx="7" cy="4" r="1" fill="#fff" />
      <circle cx="11" cy="4" r="1" fill="#fff" />
    </g>
  ),
  trayWechat: (
    <g stroke="none">
      <ellipse cx="7" cy="7" rx="6.500" ry="5.500" fill="#28c445" />
      <ellipse cx="12" cy="12" rx="5" ry="4.500" fill="#d6e8dc" />
    </g>
  ),
  trayNet: (
    <path d="M5 3h12v9H5zM1 1h4v6H1zM3 7v9h14M8 15h6" stroke="#fff" strokeWidth="1.300" />
  ),
  trayVolume: (
    <g stroke="#fff" strokeWidth="1.200">
      <path d="M1 6h3l4-4v14l-4-4H1zM10 6q2 3 0 6" />
      <path d="M12 4q4 5 0 10M14 2q6 7 0 14" stroke="#aab" />
    </g>
  ),
  trayCloud: (
    <>
      <path d="M4 14q-4-1-2-5 2-2 4-1 1-4 5-3 3 1 3 4 3 1 2 4-1 2-4 1z" stroke="#fff" />
      <path d="M6 11q3-4 6 2" stroke="#fff" />
    </>
  ),
  nine: (
    <>
      <circle cx="10" cy="10" r="9.500" stroke="#111a24" strokeWidth="2" strokeDasharray="2 1.500" />
      <path d="M11 1q3 0 4 1" stroke="#35c8d8" strokeWidth="2" />
      <text x="10" y="15" fontSize="14" fontWeight="700" textAnchor="middle" fontFamily="Open Sans" fill="#fff" stroke="none">
        9
      </text>
    </>
  ),
};

/* ---------- title and menu ---------- */

const Shell = styled.div`
  display: flex;
  flex-direction: column;
  min-height: 100vh;
`;

const TitleBar = styled.header`
  display: flex;
  align-items: center;
  gap: 5px;
  height: 21px;
  padding: 0 4px 2px 3px;
  background: #fff;
`;

const WindowButtons = styled.div`
  display: flex;
  align-items: center;
  gap: 19px;
  margin-left: auto;
`;

const MenuBar = styled.nav`
  display: flex;
  align-items: center;
  gap: 19px;
  height: 22px;
  padding: 0 0 2px 8px;
  background: #d6d6d6;
`;

const MenuItem = styled.button`
  display: flex;
  align-items: center;
  gap: 11px;
  margin-right: ${(p) => (p.$wide ? 1 : 0)}px;
  white-space: nowrap;
  line-height: 20px;
`;

const menus = [
  ['文件', 'F'],
  ['编辑', 'E'],
  ['视图', 'V'],
  ['布局', 'L'],
  ['对象', 'C'],
  ['效果', 'C'],
  ['位图', 'B'],
  ['文本', 'X'],
  ['表格', 'T'],
  ['工具', 'O'],
  ['窗口', 'W'],
  ['帮助', 'H'],
  ['选项', 'O', '...'],
  ['贴齐', 'T'],
];

const macros = ['嵌套优排', '查找重叠', '分割对象', 'CAD工具', '段落缩进', '测量长度', '创建边框', '闭合曲线', '减少节点', '统一字体', '锁定容器'];

const Plain = styled.span`
  white-space: nowrap;
`;

/* ---------- property bar ---------- */

const PropertyBar = styled.div`
  display: flex;
  align-items: center;
  height: 43px;
  padding-left: 2px;
  border-bottom: 1px solid #d4d4d4;
  background: #f3f3f3;
`;

const Cell = styled.button`
  display: flex;
  align-items: center;
  justify-content: center;
  flex: none;
  width: 29px;
  height: 29px;
`;

const ArrowCell = styled(Cell)`
  width: 16px;
  justify-content: flex-start;
  padding-left: 2px;
`;

const Framed = styled.span`
  display: flex;
  align-items: center;
  justify-content: center;
  width: 24px;
  height: 24px;
  border: 1px solid #adadad;
  background: #fff;
`;

const Divider = styled.i`
  flex: none;
  width: 8px;
  height: ${(p) => p.$h || 33}px;
  background: linear-gradient(#cfcfcf, #cfcfcf) center / 1px 100% no-repeat;
`;

const Grip = styled(Divider)`
  background: linear-gradient(#cfcfcf, #cfcfcf) center / 1px 100% no-repeat,
    linear-gradient(#fff, #fff) center / 5px 100% no-repeat;
`;

const Box = styled.div`
  position: relative;
  display: flex;
  flex: none;
  width: ${(p) => p.$w}px;
  height: 24px;
  margin: 0 2px;
  border: 1px solid #adadad;
  background: ${(p) => (p.$grey ? '#e6e6e6' : '#fff')};
`;

const Field = styled.input`
  flex: 1;
  min-width: 0;
  padding: 0 3px;
  border: 0;
  background: none;
  font-size: 12px;
  line-height: 15px;
  outline: 0;
`;

const Select = styled.select`
  flex: 1;
  appearance: none;
  padding: 0 3px;
  border: 0;
  background: none;
  font-size: ${(p) => p.$size || 12}px;
`;

const SelectArrow = styled.span`
  position: absolute;
  right: 3px;
  top: 9px;
  pointer-events: none;
`;

const DropButton = styled.button`
  display: flex;
  align-items: center;
  justify-content: center;
  width: 18px;
  border-left: 1px solid #adadad;
  background: #e6e6e6;
`;

const Stack = styled.div`
  display: flex;
  flex-direction: column;
  gap: ${(p) => p.$gap || 0}px;
  margin-left: 5px;
`;

const PairRow = styled.label`
  display: flex;
  width: 97px;
  height: 17px;
  border: 1px solid #adadad;
  background: #fff;

  & + & {
    border-top: 0;
    height: 16px;
  }
`;

const PairBox = styled.div`
  display: flex;
  flex-direction: column;
  margin-right: 2px;
`;

const Spin = styled.span`
  display: flex;
  flex-direction: ${(p) => (p.$column ? 'column' : 'row')};
  align-items: center;
  justify-content: space-evenly;
  width: ${(p) => (p.$column ? 18 : 24)}px;
  border-left: 1px solid #adadad;
  background: #e6e6e6;
`;

const UnitLabel = styled.label`
  margin-left: 4px;
`;

const Pair = ({ names, values }) => (
  <PairBox>
    {values.map((value, i) => (
      <PairRow key={names[i]}>
        <Field aria-label={names[i]} defaultValue={value} />
        <Spin>
          <Tri dir="smallDown" />
          <Tri dir="smallUp" />
        </Spin>
      </PairRow>
    ))}
  </PairBox>
);

const Tool = ({ name, framed }) => (
  <Cell type="button" aria-label={name}>
    {framed ? (
      <Framed>
        <Icon name={name} size={18} />
      </Framed>
    ) : (
      <Icon name={name} size={18} box={name === 'plus' ? 24 : 18} />
    )}
  </Cell>
);

const Arrow = ({ name }) => (
  <ArrowCell type="button" aria-label={name}>
    <Tri />
  </ArrowCell>
);

const Properties = () => {
  const [zoom, setZoom] = useState('75%');

  return (
    <PropertyBar>
      <Tool name="newDoc" />
      <Tool name="open" />
      <Arrow name="open list" />
      <Tool name="save" />
      <Tool name="print" />
      <Divider />
      <Tool name="cut" />
      <Tool name="copy" />
      <Tool name="paste" />
      <Divider />
      <Tool name="undo" />
      <Arrow name="undo list" />
      <Tool name="redo" />
      <Arrow name="redo list" />
      <Divider />
      <Tool name="connect" />
      <Divider />
      <Tool name="importIn" />
      <Tool name="exportOut" />
      <Divider />
      <Tool name="pdf" />
      <Box $w={86}>
        <Field aria-label="缩放级别" value={zoom} onChange={(e) => setZoom(e.target.value)} />
        <DropButton type="button" aria-label="缩放列表">
          <Tri />
        </DropButton>
      </Box>
      <Tool name="fullscreen" />
      <Divider />
      <Tool name="rulers" />
      <Tool name="grid" />
      <Tool name="guides" framed />
      <Grip $h={39} />
      <Box $w={160} $grey>
        <Select aria-label="页面大小">
          <option>A4</option>
        </Select>
        <SelectArrow>
          <Tri />
        </SelectArrow>
      </Box>
      <Stack>
        <Icon name="pageW" size={16} />
        <Icon name="pageH" size={16} />
      </Stack>
      <Pair names={['页面宽度', '页面高度']} values={['210.0 mm', '297.0 mm']} />
      <Divider />
      <Tool name="portrait" framed />
      <Tool name="landscape" />
      <Divider />
      <Tool name="pages" framed />
      <Tool name="bars" />
      <Divider />
      <UnitLabel htmlFor="unit">
        <Cn>单位</Cn>:
      </UnitLabel>
      <Box $w={92} $grey>
        <Select id="unit" $size={13}>
          <option>毫米</option>
        </Select>
        <SelectArrow>
          <Tri />
        </SelectArrow>
      </Box>
      <Divider />
      <Stack>
        <Icon name="nudge" size={19} box={18} />
      </Stack>
      <Box $w={80}>
        <Field aria-label="微调距离" defaultValue="1.0 mm" />
        <Spin $column>
          <Tri dir="smallUp" />
          <Tri dir="smallDown" />
        </Spin>
      </Box>
      <Divider />
      <Stack $gap={2}>
        <Icon name="dupX" size={15} />
        <Icon name="dupY" size={15} />
      </Stack>
      <Pair names={['再制 X', '再制 Y']} values={['5.0 mm', '5.0 mm']} />
      <Divider />
      <Tool name="treatAs" />
      <Divider />
      <Tool name="plus" />
    </PropertyBar>
  );
};

/* ---------- custom toolbar ---------- */

const ToolBar = styled.div`
  display: flex;
  align-items: center;
  height: 48px;
  padding-left: 2px;
  border-bottom: 1px solid #d4d4d4;
`;

const BigCell = styled.button`
  position: relative;
  display: flex;
  align-items: center;
  justify-content: center;
  width: 45px;
  height: 38px;
`;

const toolbarGroups = [
  ['planeGreen', 'planePurple', 'planeBlue', 'planeRed', 'swap', 'cells'],
  ['ai', 'atom'],
  [
    'eye', 'squeeze', 'span', 'rotate', 'blocks', 'balloon', 'list', 'numbers', 'curves', 'book',
    'zi', 'cmyk', 'colorExport', 'cdr', 'steps', 'boxes', 'jian', 'suan', 'wen', 'unlock', 'turn',
    'article', 'fitText', 'findText', 'target', 'group', 'moveTo', 'resize',
  ],
  ['ps', 'image', 'shelf', 'cup'],
];

/* ---------- side columns ---------- */

const Body = styled.main`
  display: flex;
  flex: 1;
`;

const SideBar = styled.aside`
  display: flex;
  flex-direction: column;
  align-items: center;
  width: 40px;
  padding-top: 1px;
  border-right: 1px solid #d4d4d4;
`;

const SideCell = styled.button`
  position: relative;
  display: flex;
  align-items: center;
  justify-content: center;
  width: 31px;
  height: 31px;
  margin: 3px 0;
  ${(p) =>
    p.$active &&
    css`
      border: 1px solid #adadad;
      background: #fff;
    `}
`;

const AddCell = styled(SideCell)`
  margin-top: 8px;
`;

const SideRule = styled.i`
  width: 30px;
  height: 8px;
  background: linear-gradient(#cfcfcf, #cfcfcf) center / 100% 1px no-repeat;
`;

const SideGrip = styled.i`
  width: 36px;
  height: 5px;
  border: solid #fff;
  border-width: 2px 1px;
  background: #cfcfcf;
`;

const Weight = styled.i`
  width: 20px;
  height: ${(p) => p.$h}px;
  background: ${DARK};
`;

const toolbox = [
  [['pick', 1], ['shape', 1]],
  [['crop', 1], ['zoom', 1]],
  [['freehand', 1], ['artistic'], ['rect', 1], ['ellipse', 1], ['polygon', 1]],
  [['textTool', 1]],
  [['dimension', 1], ['connector', 1]],
  [['shadow', 1], ['checker']],
  [['dropper', 1], ['bucket', 1], ['smartFill']],
];

const weights = [1, 2, 4, 5, 6, 7, 8, 10, 11];
const perfectShapes = ['arrowShape', 'star', 'callout', 'shapes', 'banner', 'flow'];

/* ---------- workspace ---------- */

const Workspace = styled.section`
  display: flex;
  flex-direction: column;
  flex: 1;
  min-width: 0;
`;

const Tabs = styled.div`
  display: flex;
  height: 20px;
  border-bottom: 1px solid #0f9fe0;
  background: #e8e8e8;
`;

const Tab = styled.button`
  width: 76px;
  padding: 0 0 1px 2px;
  background: #cce3ff;
  text-align: left;
  line-height: 18px;
`;

const AddTab = styled.button`
  display: flex;
  align-items: center;
  justify-content: center;
  width: 20px;
  background: #d4d4d4;
`;

const CanvasRow = styled.div`
  display: flex;
  flex: 1;
`;

const Canvas = styled.div`
  position: relative;
  flex: 1;
  overflow: hidden;
  background: #fff;
`;

const Frame = styled.div`
  position: absolute;
  left: 435px;
  top: 294px;
  width: 291px;
  height: 322px;
  border: 1px solid #333;
`;

const Paper = styled.article`
  position: absolute;
  left: 754px;
  top: 213px;
  bottom: 0;
  width: 513px;
  padding: 117px 0 0 54px;
  border: 1px solid #a2a2a2;
  border-bottom: 0;
  background: #fff;
  box-shadow: 6px 4px 0 #bfbfbf;
  font-family: 'Liberation Sans', 'Noto Sans CJK SC', sans-serif;
  font-size: 11px;
  line-height: 13px;
  color: #231815;

  p {
    margin: 0 0 12px;
    white-space: nowrap;
  }
`;

const Palette = styled.div`
  position: absolute;
  left: 812px;
  top: 214px;
  width: 304px;
  height: 57px;
  padding: 0 5px 0 9px;
  border: 1px solid #adadad;
  background: #f3f3f3;
  font-size: 13px;
  line-height: 17px;
`;

const PaletteHead = styled.div`
  display: flex;
  align-items: center;
  justify-content: space-between;
`;

const PaletteBody = styled.div`
  display: flex;
  gap: 12px;
  padding: 8px 3px 0;

  button {
    white-space: nowrap;
  }
`;

const Pointer = styled.div`
  position: absolute;
  left: 1352px;
  top: 394px;
`;

const paragraphs = [
  ['行至2023年年中，中国经济举世关注。'],
  [
    '今年上半年，中国经济运行整体呈现恢复向好态势，市场需求逐步恢复，生产供给持',
    '续增加，就业物价总体稳定，居民收入平稳增长，推动经济高质量发展持续加力。但',
    '二季度以来，部分月度经济指标增速有所回落，一些领域的发展出现暂时性波动。',
  ],
  [
    '关于中国经济走势，海内外出现了一些不同观点和声音。如何看待中国经济呈现的新',
    '现象新变化？新华社记者到权威部门、基层一线深入采访调研，进行观察分析。',
  ],
  ['（一）部分指标增速回落，当前经济复苏态势如何？'],
  ['今年上半年，中国经济走出了一条不寻常的复苏曲线——'],
  [
    '随着经济社会全面恢复常态化运行，一季度经济回升向好，实现良好开局；二季度延',
    '续恢复态势，但出口、工业利润等多个指标增速放缓，经济活跃度走弱。',
  ],
  [
    '“中国经济复苏乏力”的论调随之而起。另一方面，二季度以来，联合国、世界银行等',
    '国际组织纷纷上调今年中国经济增长预期，显示出对中国发展前景的信心。',
  ],
  ['面对经济下行压力和复杂舆论环境，如何正确看待当前中国经济复苏态势？'],
  ['“这是一轮不同于以往的复苏，复苏存在不平衡现象。”上海财经大学校长刘元春说。'],
];

const VScroll = styled.div`
  display: flex;
  flex-direction: column;
  width: 16px;
  background: #fff;
`;

const ScrollButton = styled.button`
  display: flex;
  align-items: center;
  justify-content: center;
  flex: none;
  width: 16px;
  height: 17px;
  background: #f0f0f0;
`;

const Track = styled.div`
  display: flex;
  flex-direction: ${(p) => (p.$row ? 'row' : 'column')};
  flex: 1;
`;

const Space = styled.i`
  flex: ${(p) => p.$grow};
`;

const Thumb = styled.i`
  flex: ${(p) => p.$grow};
  background: #cbcbcb;
`;

const Chevron = ({ dir, color = '#555', size = 9, weight = 2 }) => {
  const d = {
    up: 'M1 6l4-4 4 4',
    down: 'M1 3l4 4 4-4',
    left: 'M6 1L2 5l4 4',
    right: 'M3 1l4 4-4 4',
    double: 'M0 1l4 4-4 4M5 1l4 4-4 4',
  }[dir];
  return (
    <Svg width={size} height={size} viewBox="0 0 10 10" fill="none" aria-hidden="true">
      <path d={d} stroke={color} strokeWidth={weight} />
    </Svg>
  );
};

const BottomRow = styled.div`
  display: flex;
  height: 17px;
`;

const PageNav = styled.div`
  display: flex;
  align-items: center;
  flex: none;
  width: 50%;
  border-top: 1px solid #808080;
  border-right: 1px solid #808080;
`;

const NavButton = styled.button`
  display: flex;
  align-items: center;
  justify-content: center;
  width: 16px;
  height: 16px;
`;

const PageCount = styled.span`
  padding: 0 6px 0 3px;
  font-size: 13px;
  line-height: 15px;
`;

const PageTab = styled.button`
  position: relative;
  width: 46px;
  height: 17px;
  margin: -1px 0 0 9px;
  line-height: 15px;

  svg {
    position: absolute;
    inset: 0;
  }
  span {
    position: relative;
  }
`;

const Dots = styled.i`
  width: ${(p) => p.$w}px;
  height: ${(p) => p.$h}px;
  margin: ${(p) => p.$m || 0};
  background: radial-gradient(#b5b5b5 1px, transparent 1px) 0 0 / 4px 4px;
`;

const HScroll = styled.div`
  display: flex;
  flex: 1;
  margin-top: 1px;
`;

/* ---------- colour dockers ---------- */

const DocPalette = styled.aside`
  display: flex;
  flex-direction: column;
  align-items: center;
  width: 36px;
  padding-bottom: 9px;
  border-left: 1px solid #cfcfcf;
  border-right: 1px solid #cfcfcf;
`;

const ColorPalette = styled(DocPalette)`
  width: 67px;
  padding-bottom: 0;
  border: 0;
`;

const DockHead = styled.div`
  display: flex;
  flex-direction: column;
  align-items: center;
  height: 47px;
`;

const DockButton = styled.button`
  display: flex;
  align-items: center;
  justify-content: center;
  height: ${(p) => p.$h || 20}px;
`;

const Swatches = styled.div`
  display: grid;
  grid-template-columns: 32px 32px;
  gap: 1px;
  padding: 1px;
  background: #595757;
`;

const Swatch = styled.button`
  width: 32px;
  height: 32px;
  background: ${(p) => p.$color};
`;

const NoneFrame = styled.span`
  display: block;
  padding: 1px;
  background: #595757;
`;

const PaletteScroll = styled.div`
  display: flex;
  align-items: center;
  justify-content: space-between;
  width: 100%;
  height: 16px;
  margin-top: 5px;
  background: #f0f0f0;

  i {
    width: 17px;
    height: 15px;
    margin-right: 18px;
    background: #cbcbcb;
  }
`;

const colors = [
  ['', '#51bdef'],
  ['#231815', '#8fd3f8'],
  ['#3e3a37', '#00652a'],
  ['#595757', '#00a73c'],
  ['#727171', '#6fb92c'],
  ['#898989', '#abcd03'],
  ['#9c9f9e', '#ea5504'],
  ['#b4b4b4', '#ef8200'],
  ['#c9c9c9', '#fdd000'],
  ['#dadada', '#b5cad8'],
  ['#eeeeee', '#fff27f'],
  ['#ffffff', '#fff7ae'],
  ['#1d2088', '#fffcdb'],
  ['#00a0e9', '#d9b162'],
  ['#005bac', '#d3ead8'],
  ['#003e96', '#d8e583'],
  ['#009944', '#120404'],
  ['#fff100', '#a7351f'],
  ['#e60012', '#901a05'],
  ['#e4007f', '#a40000'],
  ['#a40082', '#7d0000'],
  ['#f3b0b1', '#ae9470'],
  ['#718bc6', '#d4945a'],
  ['#008cd8', '#af4083'],
];

const NoColor = ({ size = 32 }) => (
  <Svg width={size} height={size} viewBox="0 0 32 32" aria-hidden="true">
    <rect width="32" height="32" fill="#fff" />
    <path d="M1 1l30 30M31 1L1 31" stroke="#333" strokeWidth={size < 32 ? 2 : 1.2} />
  </Svg>
);

/* ---------- status bar ---------- */

const StatusBar = styled.footer`
  position: relative;
  display: flex;
  align-items: center;
  height: 38px;
  padding: 0 0 2px 8px;
  border-top: 1px solid #d4d4d4;
`;

const Coordinates = styled.div`
  display: flex;
  align-items: center;
  justify-content: space-between;
  width: 124px;
  margin-right: 127px;
  font-size: 11px;
  white-space: nowrap;
`;

const StatusItems = styled.div`
  display: flex;
  align-items: center;
  gap: 17px;
`;

const StatusItem = styled.button`
  display: flex;
  align-items: center;
  gap: 7px;
  white-space: nowrap;
`;

const StatusTail = styled.div`
  display: flex;
  align-items: center;
  gap: 14px;
  margin-left: 14px;
`;

const ItemText = styled.span`
  line-height: 18px;
`;

const Swap = styled.strong`
  width: 17px;
  margin-right: -4px;
  font-size: 17px;
  font-weight: 900;
  line-height: 20px;
  color: #e60012;
`;

const FillState = styled.div`
  display: flex;
  align-items: center;
  gap: 2px;
`;

const FillNone = styled.span`
  margin: 0 2px;
  border: 1px solid #999;
`;

const OutlineState = styled.div`
  display: flex;
  align-items: flex-end;
  justify-content: flex-end;
  width: 50px;
  height: 24px;
  margin-left: auto;
  margin-right: 177px;
  border-left: 1px solid #cfcfcf;

  i {
    width: 21px;
    height: 20px;
    background: #231815;
  }
`;

const Recorder = styled.div`
  position: absolute;
  right: 10px;
  top: -3px;
  display: flex;
  align-items: center;
  justify-content: space-between;
  width: 243px;
  height: 25px;
  padding: 0 3px 2px 5px;
  border: 1px solid #7d7d7d;
  background: linear-gradient(#fbfaf8, #dcd9d2);
  font-size: 12px;

  button {
    display: flex;
    align-items: center;
    gap: 3px;
  }
  b {
    color: #f00000;
    font-size: 11px;
  }
`;

const statusItems = [
  ['spray', '椎体展开'],
  ['spray', '面积报价'],
  ['spray', '快速定位'],
  ['spray', '中英标点互换'],
  ['bleed', '加出血框'],
  ['note', '移至主页'],
  ['container', '容器处理', 'L'],
  ['swap'],
  ['swatchDoc', '文件注释', 'Z'],
  ['replace', '替换颜色'],
  ['cup', '一键转曲'],
  ['recent', '打开最近用过的文件', 'R'],
];

/* ---------- taskbar ---------- */

const TaskBar = styled.footer`
  display: flex;
  height: 40px;
  background: linear-gradient(90deg, #20353e, #213540 60%, #1b2944);
  color: #fff;
`;

const TaskIcon = styled.button`
  display: flex;
  align-items: center;
  justify-content: center;
  width: 49px;
`;

const Task = styled.button`
  display: flex;
  align-items: center;
  gap: 5px;
  width: 161px;
  padding-left: 11px;
  white-space: nowrap;
  background: ${(p) => (p.$active ? '#4c5b66' : 'none')};
  background-image: linear-gradient(#76b9ed, #76b9ed);
  background-repeat: no-repeat;
  background-position: center bottom;
  background-size: ${(p) => (p.$active ? '100%' : '152px')} 2px;
`;

const Tray = styled.div`
  display: flex;
  align-items: center;
  gap: 6px;
  margin-left: auto;
  font-size: 14px;
`;

const Clock = styled.time`
  display: flex;
  flex-direction: column;
  align-items: center;
  width: 82px;
  margin-right: 3px;
  padding-bottom: 2px;
  border-right: 1px solid #6d7786;
  font-size: 12px;
  line-height: 19px;
`;

const tasks = [
  ['windows'],
  ['search'],
  ['calc'],
  ['notepad', '无标题 - 记事本'],
  ['browser'],
  ['helmet'],
  ['ocam'],
  ['cube', '整车 - search-ms:...'],
  ['drive', 'C:\\'],
  ['typeTool'],
  ['psBlack'],
  ['calcColor'],
  ['psBlue', 'Adobe Photosho...'],
  ['cdrVersion'],
  ['corel', 'CorelDRAW X8 (6...', true],
  ['ocam', 'ocam'],
];

const trayIcons = [
  'trayRec', 'traySearch', 'trayShield', 'trayPdf', 'trayE', 'trayNote',
  'trayPenguin', 'trayWechat', 'trayNet', 'trayVolume', 'trayCloud',
];

const App = () => {
  return (
    <Shell>
      <GlobalStyle />
      <TitleBar>
        <Icon name="logo" size={16} />
        <Plain>CorelDRAW X8 (64-Bit) - 未命名 -1</Plain>
        <WindowButtons>
          <button type="button" aria-label="账户">
            <Icon name="account" size={16} />
          </button>
          <button type="button" aria-label="最小化">
            <Svg width="12" height="14">
              <path d="M1 12h11" stroke="#000" strokeWidth="3" />
            </Svg>
          </button>
          <button type="button" aria-label="还原">
            <Svg width="14" height="14" fill="none" stroke="#000" strokeWidth="1.500">
              <path d="M1 1h8v7H1zM1 2h8" />
              <path d="M5 5h8v7H5zM5 6h8" fill="#fff" />
            </Svg>
          </button>
          <button type="button" aria-label="关闭">
            <Svg width="12" height="12">
              <path d="M1 1l10 10M11 1L1 11" stroke="#000" strokeWidth="2" />
            </Svg>
          </button>
        </WindowButtons>
      </TitleBar>

      <MenuBar>
        {menus.map(([text, accel, tail], i) => (
          <MenuItem key={text} type="button" $wide={i > 3}>
            <Plain>
              <Label text={text} accel={accel} tail={tail} />
            </Plain>
          </MenuItem>
        ))}
        <MenuItem type="button">
          <Cn>启动</Cn>
          <Tri />
        </MenuItem>
        {macros.map((text) => (
          <MenuItem key={text} type="button">
            {text === 'CAD工具' ? (
              <Plain>
                CAD<Cn>工具</Cn>
              </Plain>
            ) : (
              <Cn>{text}</Cn>
            )}
          </MenuItem>
        ))}
      </MenuBar>

      <Properties />

      <ToolBar>
        {toolbarGroups.map((group, i) => (
          <React.Fragment key={group[0]}>
            {i > 0 && <Divider $h={37} />}
            {group.map((name) => (
              <BigCell key={name} type="button" aria-label={name}>
                <Icon name={name} size={30} />
                {name.startsWith('plane') && <Corner $right={5} $bottom={1} />}
              </BigCell>
            ))}
          </React.Fragment>
        ))}
      </ToolBar>

      <Body>
        <SideBar>
          {toolbox.map((group, i) => (
            <React.Fragment key={i}>
              {i > 0 && <SideRule />}
              {group.map(([name, flyout]) => (
                <SideCell key={name} type="button" $active={name === 'pick'} aria-label={name}>
                  <Icon name={name} size={20} />
                  {flyout && <Corner $right={1} />}
                </SideCell>
              ))}
            </React.Fragment>
          ))}
          <SideRule />
          <AddCell type="button" aria-label="自定义">
            <Icon name="plus" size={24} />
          </AddCell>
        </SideBar>

        <SideBar>
          <SideCell type="button" aria-label="hourglass">
            <Icon name="hourglass" size={20} />
          </SideCell>
          {weights.map((h) => (
            <SideCell key={h} type="button" aria-label={`${h} px`}>
              <Weight $h={h} />
            </SideCell>
          ))}
          {perfectShapes.map((name) => (
            <SideCell key={name} type="button" aria-label={name}>
              <Icon name={name} size={20} />
            </SideCell>
          ))}
          <SideGrip />
        </SideBar>

        <Workspace>
          <Tabs>
            <Tab type="button">
              <Cn>未命名 -1</Cn>
            </Tab>
            <AddTab type="button" aria-label="新建文档">
              <Svg width="11" height="11">
                <path d="M5 0v11M0 5h11" stroke="#a3a3a3" strokeWidth="2" />
              </Svg>
            </AddTab>
          </Tabs>
          <CanvasRow>
            <Canvas>
              <Frame />
              <Paper>
                {paragraphs.map((lines) => (
                  <p key={lines[0]}>
                    {lines.map((line, i) => (
                      <React.Fragment key={line}>
                        {i > 0 && <br />}
                        {line}
                      </React.Fragment>
                    ))}
                  </p>
                ))}
              </Paper>
              <Palette>
                <PaletteHead>
                  <span>作图小能手</span>
                  <button type="button" aria-label="关闭">
                    <Svg width="15" height="10">
                      <path d="M2 0l9 10M11 0L2 10" stroke="#000" strokeWidth="2" />
                    </Svg>
                  </button>
                </PaletteHead>
                <PaletteBody>
                  {['QQ文字', '页面适配', '一键转曲', '段落缩进', '说明'].map((text) => (
                    <button key={text} type="button">
                      {text}
                    </button>
                  ))}
                </PaletteBody>
              </Palette>
              <Pointer>
                <Svg width="12" height="19">
                  <path d="M0 0v16l4-4 3 7 2-1-3-6h5z" fill="#000" />
                </Svg>
              </Pointer>
            </Canvas>
            <VScroll>
              <ScrollButton type="button" aria-label="上">
                <Chevron dir="up" />
              </ScrollButton>
              <Track>
                <Space $grow={116} />
                <Thumb $grow={409} />
                <Space $grow={272} />
              </Track>
              <ScrollButton type="button" aria-label="下">
                <Chevron dir="down" />
              </ScrollButton>
            </VScroll>
          </CanvasRow>
          <BottomRow>
            <PageNav>
              <NavButton type="button" aria-label="添加页">
                <Icon name="pageAdd" size={10} h={13} />
              </NavButton>
              <NavButton type="button" aria-label="首页">
                <Icon name="first" size={10} h={12} />
              </NavButton>
              <NavButton type="button" aria-label="上一页">
                <Icon name="prev" size={10} h={12} />
              </NavButton>
              <PageCount>1 的 1</PageCount>
              <NavButton type="button" aria-label="下一页">
                <Icon name="next" size={10} h={12} />
              </NavButton>
              <NavButton type="button" aria-label="末页">
                <Icon name="last" size={10} h={12} />
              </NavButton>
              <NavButton type="button" aria-label="在后添加页">
                <Icon name="pageAdd" size={10} h={13} />
              </NavButton>
              <PageTab type="button">
                <Svg width="46" height="17">
                  <path d="M0 0l5 16h36l5-16z" fill="#fff" />
                  <path d="M0 0l5 16h36l5-16" fill="none" stroke="#777" />
                </Svg>
                <span>
                  <Cn>页</Cn> 1
                </span>
              </PageTab>
              <Dots $w={6} $h={14} $m="0 2px 0 auto" />
            </PageNav>
            <HScroll>
              <ScrollButton type="button" aria-label="左">
                <Chevron dir="left" />
              </ScrollButton>
              <Track $row>
                <Thumb $grow={1} />
              </Track>
              <ScrollButton type="button" aria-label="右">
                <Chevron dir="right" />
              </ScrollButton>
              <ScrollButton type="button" aria-label="导航器">
                <Icon name="zoomSmall" size={13} />
              </ScrollButton>
            </HScroll>
          </BottomRow>
        </Workspace>

        <DocPalette>
          <DockHead>
            <Dots $w={30} $h={7} $m="1px 0 0" />
            <DockButton type="button" aria-label="菜单">
              <Tri dir="right" />
            </DockButton>
            <DockButton type="button" aria-label="取色">
              <Icon name="dropper" size={13} box={20} />
            </DockButton>
          </DockHead>
          <DockButton type="button" $h={33} aria-label="向上滚动">
            <Chevron dir="up" color="#d0d0d0" size={21} />
          </DockButton>
          <NoneFrame>
            <NoColor />
          </NoneFrame>
          <Space $grow={1} />
          <DockButton type="button" $h={33} aria-label="向下滚动">
            <Chevron dir="down" color="#d0d0d0" size={21} />
          </DockButton>
          <DockButton type="button" $h={32} aria-label="展开">
            <Chevron dir="double" color="#b4b4b4" size={19} weight={1.4} />
          </DockButton>
        </DocPalette>

        <ColorPalette>
          <DockHead>
            <Dots $w={60} $h={7} $m="1px 0 0" />
            <DockButton type="button" aria-label="菜单">
              <Tri dir="right" />
            </DockButton>
            <DockButton type="button" aria-label="取色">
              <Icon name="dropperGrey" size={13} box={20} />
            </DockButton>
          </DockHead>
          <Swatches>
            {colors.flat().map((color, i) =>
              color ? (
                <Swatch key={i} type="button" $color={color} aria-label={color} />
              ) : (
                <Swatch key={i} type="button" aria-label="无">
                  <NoColor />
                </Swatch>
              )
            )}
          </Swatches>
          <PaletteScroll>
            <ScrollButton type="button" aria-label="左">
              <Chevron dir="left" />
            </ScrollButton>
            <i />
            <ScrollButton type="button" aria-label="右">
              <Chevron dir="right" />
            </ScrollButton>
          </PaletteScroll>
        </ColorPalette>
      </Body>

      <StatusBar>
        <Coordinates>
          ( 245.475, 223.324 )
          <Tri dir="right" />
        </Coordinates>
        <StatusItems>
          {statusItems.map(([icon, text, accel], i) =>
            text ? (
              <StatusItem key={i} type="button">
                <Icon name={icon} size={17} box={icon === 'cup' ? 30 : 18} />
                <ItemText>
                  <Label text={text} accel={accel} />
                </ItemText>
              </StatusItem>
            ) : (
              <Swap key={i}>换</Swap>
            )
          )}
        </StatusItems>
        <StatusTail>
          <button type="button" aria-label="最近文件">
            <Tri />
          </button>
          <button type="button" aria-label="显示">
            <Icon name="monitor" size={17} box={18} />
          </button>
          <FillState>
            <Icon name="bucket" size={16} box={20} />
            <FillNone>
              <NoColor size={20} />
            </FillNone>
            <Cn>无</Cn>
          </FillState>
        </StatusTail>
        <OutlineState>
          <i />
        </OutlineState>
        <Recorder>
          <button type="button">
            <Icon name="stopDot" size={14} box={18} />
            停止
          </button>
          <button type="button">
            <Icon name="pause" size={16} box={18} />
            继续
          </button>
          <button type="button">
            <Icon name="screen" size={16} box={18} />
            屏幕捕获
          </button>
          <b>00:00:00</b>
        </Recorder>
      </StatusBar>

      <TaskBar>
        {tasks.map(([icon, text, active], i) =>
          text ? (
            <Task key={i} type="button" $active={active}>
              <Icon name={icon} size={active ? 24 : 22} box={24} />
              {text}
            </Task>
          ) : (
            <TaskIcon key={i} type="button" aria-label={icon}>
              <Icon name={icon} size={24} />
            </TaskIcon>
          )
        )}
        <Tray>
          {trayIcons.map((name) => (
            <Icon key={name} name={name} size={18} />
          ))}
          <span>英</span>
          <Icon name="nine" size={20} />
          <Clock>
            <span>13:12:55</span>
            <span>2023-07-19</span>
          </Clock>
        </Tray>
      </TaskBar>
    </Shell>
  );
};

export default App;
